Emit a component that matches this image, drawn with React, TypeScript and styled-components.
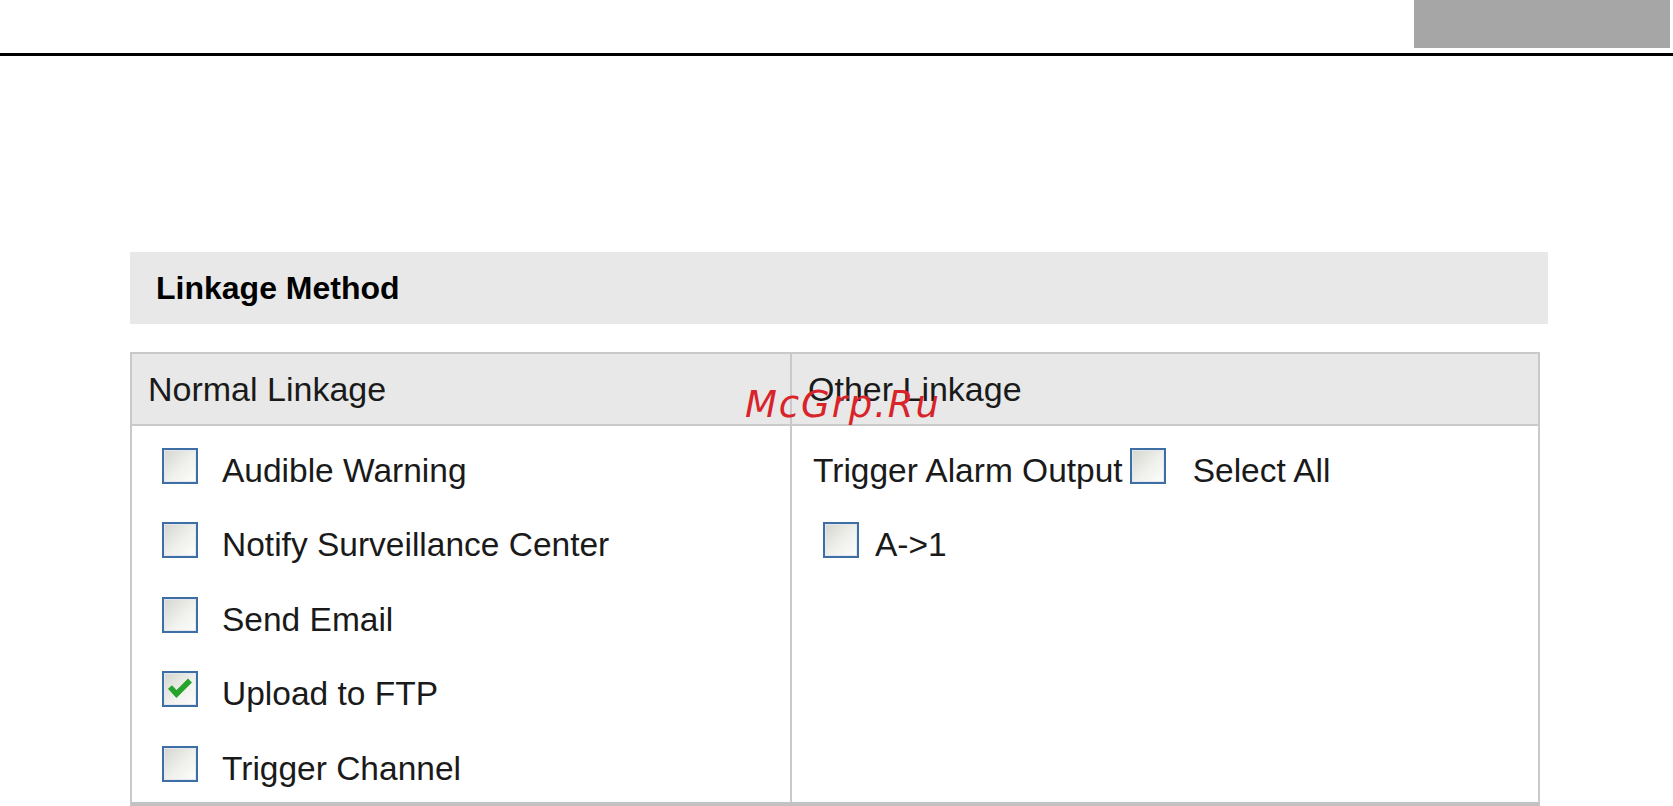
import React from 'react'
import styled, { createGlobalStyle } from 'styled-components'

const GlobalStyle = createGlobalStyle`
  html, body {
    margin: 0;
    padding: 0;
    background: #fff;
  }

  body {
    font-family: 'Liberation Sans', Arial, sans-serif;
    color: #111;
  }
`

const Page = styled.div`
  position: relative;
  width: 1673px;
  height: 806px;
  overflow: hidden;
`

const TopBar = styled.div`
  display: flex;
  justify-content: flex-end;
  height: 48px;
  padding-right: 3px;
`

const GrayTab = styled.div`
  width: 256px;
  background: #a6a6a6;
`

const Rule = styled.div`
  height: 3px;
  margin-top: 5px;
  background: #000;
`

const Content = styled.div`
  padding: 196px 0 0 130px;
`

const SectionBar = styled.div`
  display: flex;
  align-items: center;
  box-sizing: border-box;
  width: 1418px;
  height: 72px;
  padding-left: 26px;
  background: #e8e8e8;
  font-size: 32px;
  font-weight: bold;
  color: #000;
`

const LinkTable = styled.div`
  display: grid;
  grid-template-columns: 658px 1fr;
  box-sizing: border-box;
  width: 1410px;
  margin-top: 28px;
  border: 2px solid #c9c9c9;
  border-bottom: 4px solid #c2c2c2;
`

const HeadCell = styled.div<{ divided?: boolean }>`
  display: flex;
  align-items: center;
  height: 70px;
  padding-left: 16px;
  background: #e8e8e8;
  border-bottom: 2px solid #c9c9c9;
  border-left: ${(p) => (p.divided ? '2px solid #c9c9c9' : 'none')};
  font-size: 34px;
  color: #1a1a1a;
`

const BodyCell = styled.div<{ divided?: boolean; indent: number }>`
  display: flex;
  flex-direction: column;
  gap: 26.4px;
  box-sizing: border-box;
  height: 376px;
  padding: 21px 0 0 ${(p) => p.indent}px;
  border-left: ${(p) => (p.divided ? '2px solid #c9c9c9' : 'none')};
`

const OptionRow = styled.div<{ gap: number; offset?: number }>`
  display: flex;
  align-items: flex-start;
  gap: ${(p) => p.gap}px;
  height: 48px;
  margin-left: ${(p) => p.offset ?? 0}px;
`

const Label = styled.span<{ lead?: number; trail?: number }>`
  font-size: 33.5px;
  line-height: 48px;
  color: #1a1a1a;
  white-space: nowrap;
  margin-left: ${(p) => p.lead ?? 0}px;
  margin-right: ${(p) => p.trail ?? 0}px;
`

const Box = styled.span`
  display: flex;
  align-items: center;
  justify-content: center;
  flex: none;
  box-sizing: border-box;
  width: 36px;
  height: 36px;
  margin-top: 1px;
  border: 2px solid #3d6fa5;
  box-shadow: inset 0 0 0 1px #e4e8ee;
  background: linear-gradient(135deg, #d6d6d0 0%, #f0f0ec 55%, #fdfdfc 100%);
`

const Watermark = styled.div`
  position: absolute;
  left: 745px;
  top: 386px;
  font-family: 'DejaVu Sans', sans-serif;
  font-style: italic;
  font-size: 37px;
  line-height: 37px;
  letter-spacing: 1.9px;
  color: #d9232a;
  pointer-events: none;
`

function Checkbox({ checked = false }: { checked?: boolean }) {
  return (
    <Box>
      {checked && (
        <svg width="32" height="32" viewBox="0 0 32 32">
          <path d="M6 14 L12.5 21 L26 7.5" fill="none" stroke="#25a32a" strokeWidth="5.5" />
        </svg>
      )}
    </Box>
  )
}

const normalOptions = [
  { label: 'Audible Warning', checked: false },
  { label: 'Notify Surveillance Center', checked: false },
  { label: 'Send Email', checked: false },
  { label: 'Upload to FTP', checked: true },
  { label: 'Trigger Channel', checked: false },
]

export default function App() {
  return (
    <Page>
      <GlobalStyle />
      <TopBar>
        <GrayTab />
      </TopBar>
      <Rule />

      <Content>
        <SectionBar>Linkage Method</SectionBar>

        <LinkTable>
          <HeadCell>Normal Linkage</HeadCell>
          <HeadCell divided>Other Linkage</HeadCell>

          <BodyCell indent={30}>
            {normalOptions.map((o) => (
              <OptionRow key={o.label} gap={24}>
                <Checkbox checked={o.checked} />
                <Label>{o.label}</Label>
              </OptionRow>
            ))}
          </BodyCell>

          <BodyCell divided indent={21}>
            <OptionRow gap={0}>
              <Label trail={7}>Trigger Alarm Output</Label>
              <Checkbox />
              <Label lead={27}>Select All</Label>
            </OptionRow>
            <OptionRow gap={16} offset={10}>
              <Checkbox />
              <Label>A-&gt;1</Label>
            </OptionRow>
          </BodyCell>
        </LinkTable>
      </Content>

      <Watermark>McGrp.Ru</Watermark>
    </Page>
  )
}
